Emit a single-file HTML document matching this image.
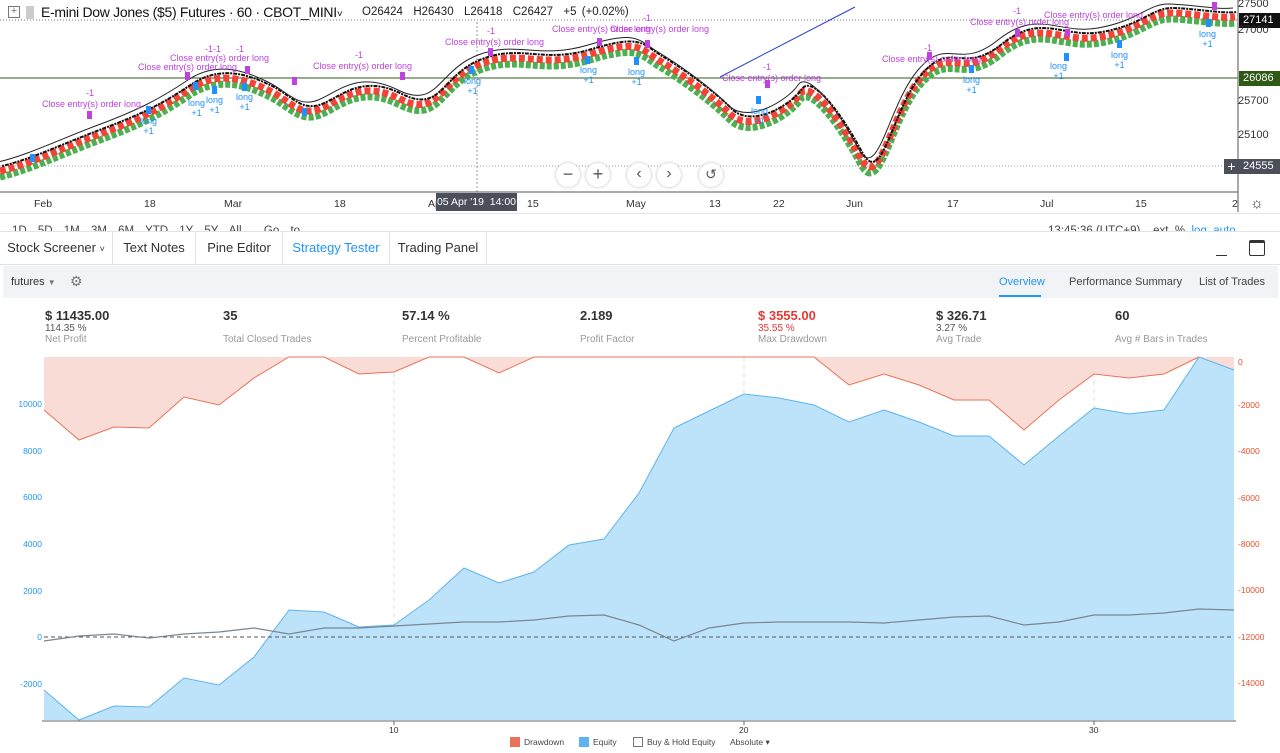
<!DOCTYPE html>
<html><head><meta charset="utf-8"><style>
*{margin:0;padding:0;box-sizing:border-box}
body{width:1280px;height:753px;overflow:hidden;background:#fff;font-family:"Liberation Sans",sans-serif;position:relative;color:#333}
.a{position:absolute;white-space:nowrap}
.tab{position:absolute;top:232px;height:32px;line-height:32px;font-size:13px;color:#333;border-right:1px solid #e0e3eb;text-align:center}
.sv{font-size:13px;font-weight:bold;color:#333}
.ss{font-size:10px;color:#555}
.sl{font-size:10px;color:#999}
.pl{position:absolute;right:2px;width:40px;font-size:11px;color:#333}
</style></head><body>
<svg class="a" style="left:0;top:0" width="1280" height="753">
<line x1="0" y1="20" x2="1238" y2="20" stroke="#777" stroke-dasharray="1,2"/>
<line x1="0" y1="166" x2="1238" y2="166" stroke="#999" stroke-dasharray="1,2"/>
<line x1="0" y1="78" x2="1238" y2="78" stroke="#2e5a16" stroke-width="1"/>
<line x1="477" y1="22" x2="477" y2="192" stroke="#999" stroke-dasharray="2,2"/>
<line x1="1238" y1="0" x2="1238" y2="212" stroke="#555"/>
<line x1="0" y1="192" x2="1238" y2="192" stroke="#555"/>
<path d="M0,172 C30,165 60,150 100,135 S160,110 190,90 S250,82 270,92 S300,118 320,110 S360,80 400,100 S440,80 480,65 S540,70 590,55 S640,50 660,62 S710,95 730,115 S790,110 800,95 S840,120 860,158 S890,115 920,80 S960,82 1000,50 S1060,45 1100,38 S1150,14 1170,14 S1220,20 1235,18" fill="none" stroke="#4caf50" stroke-width="7" stroke-dasharray="5,2" transform="translate(0,5)"/>
<path d="M0,172 C30,165 60,150 100,135 S160,110 190,90 S250,82 270,92 S300,118 320,110 S360,80 400,100 S440,80 480,65 S540,70 590,55 S640,50 660,62 S710,95 730,115 S790,110 800,95 S840,120 860,158 S890,115 920,80 S960,82 1000,50 S1060,45 1100,38 S1150,14 1170,14 S1220,20 1235,18" fill="none" stroke="#f44336" stroke-width="7" stroke-dasharray="6,3" transform="translate(0,-1)"/>
<path d="M0,172 C30,165 60,150 100,135 S160,110 190,90 S250,82 270,92 S300,118 320,110 S360,80 400,100 S440,80 480,65 S540,70 590,55 S640,50 660,62 S710,95 730,115 S790,110 800,95 S840,120 860,158 S890,115 920,80 S960,82 1000,50 S1060,45 1100,38 S1150,14 1170,14 S1220,20 1235,18" fill="none" stroke="#111" stroke-width="2" stroke-dasharray="2,1,4,1" transform="translate(2,-6)"/>
<path d="M0,172 C30,165 60,150 100,135 S160,110 190,90 S250,82 270,92 S300,118 320,110 S360,80 400,100 S440,80 480,65 S540,70 590,55 S640,50 660,62 S710,95 730,115 S790,110 800,95 S840,120 860,158 S890,115 920,80 S960,82 1000,50 S1060,45 1100,38 S1150,14 1170,14 S1220,20 1235,18" fill="none" stroke="#222" stroke-width="1" transform="translate(-2,-10)"/>
<line x1="720" y1="77" x2="855" y2="7" stroke="#2a3fd8" stroke-width="1"/>
<g fill="#1e90ff">
<rect x="30" y="154" width="5" height="8"/><rect x="146" y="106" width="5" height="8"/><rect x="193" y="82" width="5" height="8"/><rect x="212" y="86" width="5" height="8"/><rect x="242" y="83" width="5" height="8"/><rect x="302" y="108" width="5" height="8"/><rect x="469" y="66" width="5" height="8"/><rect x="585" y="56" width="5" height="8"/><rect x="634" y="57" width="5" height="8"/><rect x="756" y="96" width="5" height="8"/><rect x="969" y="65" width="5" height="8"/><rect x="1064" y="53" width="5" height="8"/><rect x="1117" y="40" width="5" height="8"/><rect x="1206" y="19" width="5" height="8"/>
</g>
<g fill="#c040e0">
<rect x="87" y="111" width="5" height="8"/><rect x="185" y="72" width="5" height="8"/><rect x="245" y="66" width="5" height="8"/><rect x="292" y="77" width="5" height="8"/><rect x="400" y="72" width="5" height="8"/><rect x="488" y="48" width="5" height="8"/><rect x="597" y="38" width="5" height="8"/><rect x="645" y="40" width="5" height="8"/><rect x="765" y="80" width="5" height="8"/><rect x="927" y="52" width="5" height="8"/><rect x="1015" y="29" width="5" height="8"/><rect x="1065" y="29" width="5" height="8"/><rect x="1212" y="2" width="5" height="8"/>
</g>
<line x1="394" y1="357" x2="394" y2="720" stroke="#ddd" stroke-dasharray="4,4"/>
<line x1="744" y1="357" x2="744" y2="720" stroke="#ddd" stroke-dasharray="4,4"/>
<line x1="1094" y1="357" x2="1094" y2="720" stroke="#ddd" stroke-dasharray="4,4"/>
<path d="M44,357 L44,410 79,440 114,427 149,428 184,397 219,405 254,378 289,357 324,357 359,374 394,372 429,357 464,357 499,373 534,357 569,357 604,357 639,357 674,357 709,357 744,357 779,357 814,357 849,385 884,374 919,385 954,400 989,400 1024,430 1059,400 1094,374 1129,378 1164,374 1199,357 1234,370 1234,357Z" fill="#f9dcd6"/>
<polyline points="44,410 79,440 114,427 149,428 184,397 219,405 254,378 289,357 324,357 359,374 394,372 429,357 464,357 499,373 534,357 569,357 604,357 639,357 674,357 709,357 744,357 779,357 814,357 849,385 884,374 919,385 954,400 989,400 1024,430 1059,400 1094,374 1129,378 1164,374 1199,357" fill="none" stroke="#e8735a" stroke-width="1"/>
<path d="M44,720 L44,690 79,720 114,706 149,707 184,678 219,685 254,657 289,610 324,612 359,627 394,625 429,600 464,568 499,583 534,572 569,545 604,539 639,493 674,428 709,411 744,394 779,398 814,405 849,422 884,410 919,422 954,436 989,436 1024,465 1059,436 1094,408 1129,414 1164,410 1199,357 1234,370 1234,720Z" fill="#bde3fb"/>
<polyline points="44,690 79,720 114,706 149,707 184,678 219,685 254,657 289,610 324,612 359,627 394,625 429,600 464,568 499,583 534,572 569,545 604,539 639,493 674,428 709,411 744,394 779,398 814,405 849,422 884,410 919,422 954,436 989,436 1024,465 1059,436 1094,408 1129,414 1164,410 1199,357 1234,370" fill="none" stroke="#5fb3f0" stroke-width="1"/>
<line x1="44" y1="637" x2="1234" y2="637" stroke="#555" stroke-dasharray="4,3"/>
<polyline points="44,641 79,636 114,634 149,638 184,634 219,632 254,628 289,634 324,628 359,628 394,626 429,624 464,622 499,622 534,620 569,616 604,615 639,625 674,641 709,628 744,623 779,622 814,622 849,622 884,623 919,620 954,617 989,616 1024,625 1059,622 1094,615 1129,615 1164,613 1199,609 1234,610" fill="none" stroke="#7a8590" stroke-width="1.2"/>
<line x1="42" y1="721" x2="1236" y2="721" stroke="#666"/>
<line x1="394" y1="721" x2="394" y2="725" stroke="#666"/><line x1="744" y1="721" x2="744" y2="725" stroke="#666"/><line x1="1094" y1="721" x2="1094" y2="725" stroke="#666"/>
</svg>

<div class="a" style="left:8px;top:6px;width:12px;height:12px;border:1px solid #777;font-size:11px;line-height:9px;text-align:center;color:#777">+</div>
<div class="a" style="left:26px;top:6px;width:8px;height:13px;background:#ccc"></div>
<div class="a" style="left:41px;top:4px;font-size:14px;color:#111;letter-spacing:-0.3px">E-mini Dow Jones ($5) Futures · 60 · CBOT_MINI<span style="font-size:10px">˅</span></div>
<div class="a" style="left:362px;top:6px;font-size:11.5px;color:#222;word-spacing:2px">O26424 &nbsp;H26430 &nbsp;L26418 &nbsp;C26427 &nbsp;+5 (+0.02%)</div>

<div class="a" style="font-size:9px;color:#c040e0;left:42px;top:99px">Close entry(s) order long</div>
<div class="a" style="font-size:9px;color:#c040e0;left:86px;top:88px">-1</div>
<div class="a" style="font-size:9px;color:#c040e0;left:138px;top:62px">Close entry(s) order long</div>
<div class="a" style="font-size:9px;color:#c040e0;left:170px;top:53px">Close entry(s) order long</div>
<div class="a" style="font-size:9px;color:#c040e0;left:205px;top:44px">-1-1 &nbsp;&nbsp;&nbsp;&nbsp;&nbsp;-1</div>
<div class="a" style="font-size:9px;color:#c040e0;left:313px;top:61px">Close entry(s) order long</div>
<div class="a" style="font-size:9px;color:#c040e0;left:355px;top:50px">-1</div>
<div class="a" style="font-size:9px;color:#c040e0;left:445px;top:37px">Close entry(s) order long</div>
<div class="a" style="font-size:9px;color:#c040e0;left:487px;top:26px">-1</div>
<div class="a" style="font-size:9px;color:#c040e0;left:552px;top:24px">Close entry(s) order long</div>
<div class="a" style="font-size:9px;color:#c040e0;left:610px;top:24px">Close entry(s) order long</div>
<div class="a" style="font-size:9px;color:#c040e0;left:643px;top:13px">-1</div>
<div class="a" style="font-size:9px;color:#c040e0;left:722px;top:73px">Close entry(s) order long</div>
<div class="a" style="font-size:9px;color:#c040e0;left:763px;top:62px">-1</div>
<div class="a" style="font-size:9px;color:#c040e0;left:882px;top:54px">Close entry(s) order long</div>
<div class="a" style="font-size:9px;color:#c040e0;left:924px;top:43px">-1</div>
<div class="a" style="font-size:9px;color:#c040e0;left:970px;top:17px">Close entry(s) order long</div>
<div class="a" style="font-size:9px;color:#c040e0;left:1044px;top:10px">Close entry(s) order long</div>
<div class="a" style="font-size:9px;color:#c040e0;left:1013px;top:6px">-1</div>
<div class="a" style="font-size:9px;color:#1e90ff;left:188px;top:98px;text-align:center">long<br>+1</div>
<div class="a" style="font-size:9px;color:#1e90ff;left:206px;top:95px;text-align:center">long<br>+1</div>
<div class="a" style="font-size:9px;color:#1e90ff;left:236px;top:92px;text-align:center">long<br>+1</div>
<div class="a" style="font-size:9px;color:#1e90ff;left:140px;top:116px;text-align:center">long<br>+1</div>
<div class="a" style="font-size:9px;color:#1e90ff;left:464px;top:76px;text-align:center">long<br>+1</div>
<div class="a" style="font-size:9px;color:#1e90ff;left:580px;top:65px;text-align:center">long<br>+1</div>
<div class="a" style="font-size:9px;color:#1e90ff;left:628px;top:67px;text-align:center">long<br>+1</div>
<div class="a" style="font-size:9px;color:#1e90ff;left:751px;top:106px;text-align:center">long<br>+1</div>
<div class="a" style="font-size:9px;color:#1e90ff;left:963px;top:75px;text-align:center">long<br>+1</div>
<div class="a" style="font-size:9px;color:#1e90ff;left:1050px;top:61px;text-align:center">long<br>+1</div>
<div class="a" style="font-size:9px;color:#1e90ff;left:1111px;top:50px;text-align:center">long<br>+1</div>
<div class="a" style="font-size:9px;color:#1e90ff;left:1199px;top:29px;text-align:center">long<br>+1</div>

<div class="pl" style="top:-2px">27500</div>
<div class="a" style="left:1239px;top:13px;width:41px;height:15px;background:#111;color:#fff;font-size:11px;line-height:15px;padding-left:4px">27141</div>
<div class="pl" style="top:24px">27000</div>
<div class="a" style="left:1239px;top:71px;width:41px;height:15px;background:#2e5a16;color:#fff;font-size:11px;line-height:15px;padding-left:4px">26086</div>
<div class="pl" style="top:95px">25700</div>
<div class="pl" style="top:129px">25100</div>
<div class="a" style="left:1224px;top:159px;width:15px;height:15px;background:#4a4f5a;color:#fff;font-size:14px;line-height:14px;text-align:center">+</div>
<div class="a" style="left:1239px;top:159px;width:41px;height:15px;background:#4a4f5a;color:#fff;font-size:11px;line-height:15px;padding-left:4px">24555</div>

<div class="a" style="left:556px;top:163px;width:24px;height:24px;border-radius:12px;background:#fff;box-shadow:0 0 3px #bbb;text-align:center;line-height:22px;font-size:18px;color:#555">−</div>
<div class="a" style="left:586px;top:163px;width:24px;height:24px;border-radius:12px;background:#fff;box-shadow:0 0 3px #bbb;text-align:center;line-height:22px;font-size:18px;color:#555">+</div>
<div class="a" style="left:627px;top:163px;width:24px;height:24px;border-radius:12px;background:#fff;box-shadow:0 0 3px #bbb;text-align:center;line-height:22px;font-size:16px;color:#555">‹</div>
<div class="a" style="left:657px;top:163px;width:24px;height:24px;border-radius:12px;background:#fff;box-shadow:0 0 3px #bbb;text-align:center;line-height:22px;font-size:16px;color:#555">›</div>
<div class="a" style="left:699px;top:163px;width:24px;height:24px;border-radius:12px;background:#fff;box-shadow:0 0 3px #bbb;text-align:center;line-height:22px;font-size:14px;color:#555">↺</div>

<div class="a" style="top:198px;left:0;width:1238px;font-size:10.5px;color:#333">
<span class="a" style="left:34px">Feb</span><span class="a" style="left:144px">18</span><span class="a" style="left:224px">Mar</span><span class="a" style="left:334px">18</span><span class="a" style="left:428px">Apr</span><span class="a" style="left:527px">15</span><span class="a" style="left:626px">May</span><span class="a" style="left:709px">13</span><span class="a" style="left:773px">22</span><span class="a" style="left:846px">Jun</span><span class="a" style="left:947px">17</span><span class="a" style="left:1040px">Jul</span><span class="a" style="left:1135px">15</span><span class="a" style="left:1232px">2</span></div>
<div class="a" style="left:436px;top:193px;width:81px;height:18px;background:#4a4f5a;color:#fff;font-size:10.5px;line-height:18px;text-align:center">05 Apr '19 &nbsp;14:00</div>
<div class="a" style="left:1250px;top:195px;font-size:15px;color:#333">☼</div>
<div class="a" style="left:0;top:213px;width:1280px;height:1px;background:#e0e3eb"></div>
<div class="a" style="left:12px;top:222px;font-size:11.5px;color:#444;word-spacing:8px;height:9px;overflow:hidden;line-height:18px">1D 5D 1M 3M 6M YTD 1Y 5Y All &nbsp;Go to</div>
<div class="a" style="left:1048px;top:222px;font-size:11.5px;color:#444;height:9px;overflow:hidden;line-height:18px">13:45:36 (UTC+9) &nbsp;&nbsp;&nbsp;ext &nbsp;% &nbsp;<span style="color:#2196f3">log &nbsp;auto</span></div>

<div class="a" style="left:0;top:231px;width:1280px;height:34px;background:#fff;border-top:1px solid #e0e3eb;border-bottom:1px solid #e0e3eb"></div>
<div class="tab" style="left:0;width:113px">Stock Screener <span style="font-size:9px">˅</span></div>
<div class="tab" style="left:113px;width:83px">Text Notes</div>
<div class="tab" style="left:196px;width:87px">Pine Editor</div>
<div class="tab" style="left:283px;width:107px;color:#2196f3">Strategy Tester</div>
<div class="tab" style="left:390px;width:97px">Trading Panel</div>
<div class="a" style="left:1216px;top:255px;width:11px;height:1px;background:#333"></div>
<div class="a" style="left:1249px;top:240px;width:16px;height:16px;border:1.5px solid #333;border-top-width:3px;border-radius:2px"></div>

<div class="a" style="left:3px;top:266px;width:1275px;height:32px;background:#f1f3f6"></div>
<div class="a" style="left:11px;top:276px;font-size:11px;color:#333">futures <span style="font-size:8px;color:#777">▼</span></div>
<div class="a" style="left:70px;top:273px;font-size:14px;color:#777">⚙</div>
<div class="a" style="left:999px;top:276px;font-size:11px;color:#2196f3">Overview</div>
<div class="a" style="left:999px;top:295px;width:42px;height:2px;background:#2196f3"></div>
<div class="a" style="left:1069px;top:276px;font-size:11px;color:#444">Performance Summary</div>
<div class="a" style="left:1199px;top:276px;font-size:11px;color:#444">List of Trades</div>

<div class="a" style="left:45px;top:308px"><div class="sv">$ 11435.00</div><div class="ss">114.35 %</div><div class="sl">Net Profit</div></div>
<div class="a" style="left:223px;top:308px"><div class="sv">35</div><div class="ss">&nbsp;</div><div class="sl">Total Closed Trades</div></div>
<div class="a" style="left:402px;top:308px"><div class="sv">57.14 %</div><div class="ss">&nbsp;</div><div class="sl">Percent Profitable</div></div>
<div class="a" style="left:580px;top:308px"><div class="sv">2.189</div><div class="ss">&nbsp;</div><div class="sl">Profit Factor</div></div>
<div class="a" style="left:758px;top:308px"><div class="sv" style="color:#e53935">$ 3555.00</div><div class="ss" style="color:#e53935">35.55 %</div><div class="sl">Max Drawdown</div></div>
<div class="a" style="left:936px;top:308px"><div class="sv">$ 326.71</div><div class="ss">3.27 %</div><div class="sl">Avg Trade</div></div>
<div class="a" style="left:1115px;top:308px"><div class="sv">60</div><div class="ss">&nbsp;</div><div class="sl">Avg # Bars in Trades</div></div>

<div class="a" style="font-size:8.5px;color:#2196f3;left:0;top:0;width:42px;text-align:right">
<div class="a" style="right:0;top:399px">10000</div><div class="a" style="right:0;top:446px">8000</div><div class="a" style="right:0;top:492px">6000</div><div class="a" style="right:0;top:539px">4000</div><div class="a" style="right:0;top:586px">2000</div><div class="a" style="right:0;top:632px">0</div><div class="a" style="right:0;top:679px">-2000</div></div>
<div class="a" style="font-size:8.5px;color:#e8502d;left:1238px;top:0">
<div class="a" style="left:0;top:357px">0</div><div class="a" style="left:0;top:400px">-2000</div><div class="a" style="left:0;top:446px">-4000</div><div class="a" style="left:0;top:493px">-6000</div><div class="a" style="left:0;top:539px">-8000</div><div class="a" style="left:0;top:585px">-10000</div><div class="a" style="left:0;top:632px">-12000</div><div class="a" style="left:0;top:678px">-14000</div></div>
<div class="a" style="font-size:8.5px;color:#333;left:389px;top:725px">10</div>
<div class="a" style="font-size:8.5px;color:#333;left:739px;top:725px">20</div>
<div class="a" style="font-size:8.5px;color:#333;left:1089px;top:725px">30</div>

<div class="a" style="left:510px;top:737px;width:10px;height:10px;background:#e8735a"></div>
<div class="a" style="left:524px;top:737px;font-size:8.5px;color:#444">Drawdown</div>
<div class="a" style="left:579px;top:737px;width:10px;height:10px;background:#5fb3f0"></div>
<div class="a" style="left:593px;top:737px;font-size:8.5px;color:#444">Equity</div>
<div class="a" style="left:633px;top:737px;width:10px;height:10px;border:1px solid #777"></div>
<div class="a" style="left:647px;top:737px;font-size:8.5px;color:#444">Buy &amp; Hold Equity</div>
<div class="a" style="left:730px;top:737px;font-size:8.5px;color:#444">Absolute ▾</div>
</body></html>
